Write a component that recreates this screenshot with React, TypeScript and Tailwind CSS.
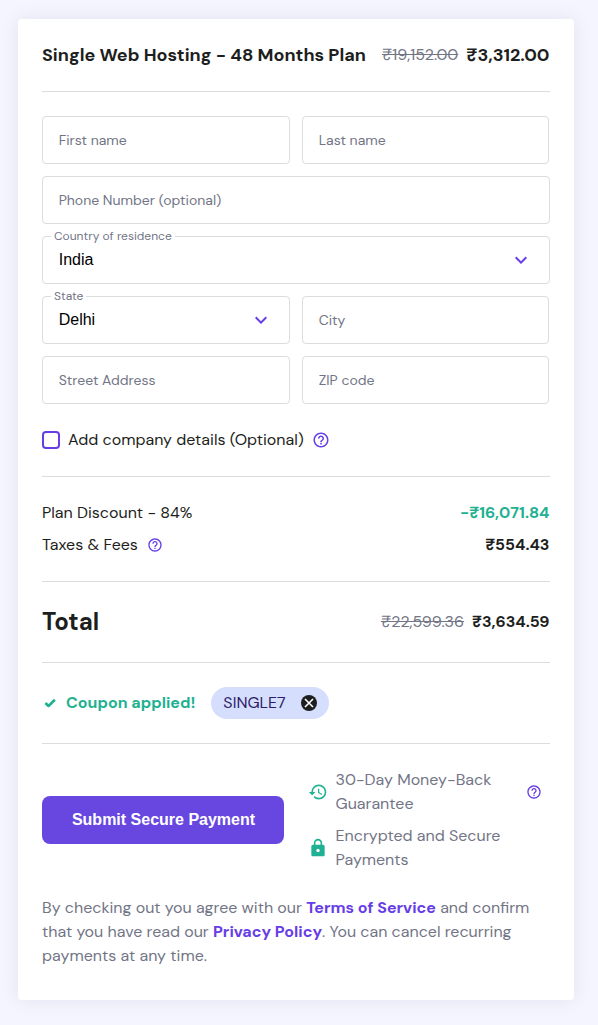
import type { ReactNode } from "react";
import { MdExpandMore, MdHelpOutline, MdHistory, MdLock } from "react-icons/md";

export default function App() {
  return (
    <div className="h-[1025px] w-[598px] bg-[#f4f5ff] px-[18px] pt-[19px] font-['DM_Sans','Inter',sans-serif] text-base leading-6 text-[#1d1e20]">
      <main className="h-[981px] w-[556px] rounded bg-white px-6 shadow-[0_0_20px_rgba(29,30,32,0.08)]">
        {/* Plan header */}
        <header className="flex h-[73px] items-center justify-between border-b border-[#dadce0] pr-[0.5px] whitespace-nowrap">
          <h1 className="text-lg font-bold">Single Web Hosting - 48 Months Plan</h1>
          <div className="flex items-center gap-2">
            <s className="text-[#727586]">₹19,152.00</s>
            <b className="text-lg">₹3,312.00</b>
          </div>
        </header>

        {/* Billing details */}
        <form className="grid grid-cols-2 gap-3 pt-6">
          <Field label="First name" />
          <Field label="Last name" className="mr-px" />
          <Field label="Phone Number (optional)" className="col-span-2" />
          <SelectField label="Country of residence" value="India" className="col-span-2" />
          <SelectField label="State" value="Delhi" />
          <Field label="City" className="mr-px" />
          <Field label="Street Address" />
          <Field label="ZIP code" className="mr-px" />
        </form>
        <div className="flex h-[73px] items-center border-b border-[#dadce0]">
          <span className="mr-2 size-[18px] rounded border-2 border-[#673de6]" />
          <span>Add company details (Optional)</span>
          <MdHelpOutline className="ml-2 size-[18px] text-[#673de6]" />
        </div>

        {/* Price breakdown */}
        <section className="flex h-[105px] flex-col gap-2 border-b border-[#dadce0] pt-6 pr-[0.5px]">
          <Row label="Plan Discount - 84%">
            <b className="text-[#1fb191]">-₹16,071.84</b>
          </Row>
          <Row label="Taxes & Fees" help>
            <b>₹554.43</b>
          </Row>
        </section>
        <section className="flex h-[81px] items-center justify-between border-b border-[#dadce0] pr-[0.5px]">
          <h2 className="text-2xl font-bold">Total</h2>
          <div className="flex gap-2">
            <s className="text-[#727586]">₹22,599.36</s>
            <b>₹3,634.59</b>
          </div>
        </section>

        <section className="flex h-[81px] items-center border-b border-[#dadce0]">
          <svg viewBox="0 0 16 16" className="mr-2 size-4 text-[#1fb191]" fill="none" stroke="currentColor" strokeWidth="2.6">
            <path d="M3.4 8 6.5 11 12.9 4.8" strokeLinejoin="round" />
          </svg>
          <b className="text-[#1fb191]">Coupon applied!</b>
          <span className="ml-4 flex h-8 w-[118px] items-center justify-between rounded-full bg-[#d5dffd] px-3">
            <span className="text-[#2f1c6a]">SINGLE7</span>
            <svg viewBox="0 0 16 16" className="size-4">
              <circle cx="8" cy="8" r="8" fill="#1d1e20" />
              <path d="m4 4 8 8m0-8-8 8" stroke="#fff" strokeWidth="1.6" />
            </svg>
          </span>
        </section>

        {/* Submit */}
        <section className="flex items-center pt-6">
          <button className="h-12 w-[242px] rounded-lg bg-[#6747e0] pl-px font-['Liberation_Sans',Arial,sans-serif] font-bold whitespace-nowrap text-white">
            Submit Secure Payment
          </button>
          <div className="ml-6 flex w-[242px] flex-col gap-2 text-[#727586]">
            <div className="flex h-12 items-center">
              <MdHistory className="mr-[7.5px] size-5 shrink-0 text-[#1fb191]" />
              <p className="grow">
                <span className="block">30-Day Money-Back</span>
                <span className="block">Guarantee</span>
              </p>
              <MdHelpOutline className="mr-2 size-4 text-[#673de6]" />
            </div>
            <div className="flex h-12 items-center">
              <MdLock className="mr-[7.5px] size-5 shrink-0 text-[#1fb191]" />
              <p>
                <span className="block">Encrypted and Secure</span>
                <span className="block">Payments</span>
              </p>
            </div>
          </div>
        </section>
        <p className="pt-6 whitespace-nowrap text-[#727586]">
          <span className="block">
            By checking out you agree with our <b className="text-[#673de6]">Terms of Service</b> and confirm
          </span>
          <span className="block">
            that you have read our <b className="text-[#673de6]">Privacy Policy</b>. You can cancel recurring
          </span>
          <span className="block">payments at any time.</span>
        </p>
      </main>
    </div>
  );
}

function Field({ label, className = "" }: { label: string; className?: string }) {
  return (
    <div className={`flex h-12 items-center rounded border border-[#dadce0] px-[15.7px] text-sm text-[#727586] ${className}`}>
      {label}
    </div>
  );
}

function SelectField({ label, value, className = "" }: { label: string; value: string; className?: string }) {
  return (
    <div className={`relative flex h-12 items-center justify-between rounded border border-[#dadce0] pr-4 pl-[15.7px] ${className}`}>
      <span className="absolute -top-[9px] left-2 bg-white px-[3px] text-xs leading-4 text-[#727586]">{label}</span>
      <span className="font-['Liberation_Sans',Arial,sans-serif] text-black">{value}</span>
      <MdExpandMore className="size-6 text-[#673de6]" />
    </div>
  );
}

function Row({ label, help, children }: { label: string; help?: boolean; children: ReactNode }) {
  return (
    <div className="flex h-6 items-center">
      <span>{label}</span>
      {help && <MdHelpOutline className="ml-[9px] size-4 text-[#673de6]" />}
      <span className="ml-auto">{children}</span>
    </div>
  );
}
